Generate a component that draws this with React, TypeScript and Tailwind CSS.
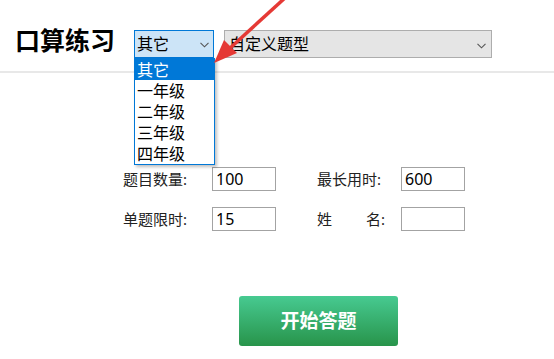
import React from "react";

function Chevron({ color = "#555" }: { color?: string }) {
  return (
    <svg width="9" height="6" viewBox="0 0 9 6" className="block">
      <path d="M0.5 0.8 L4.5 4.8 L8.5 0.8" fill="none" stroke={color} strokeWidth="1.1" />
    </svg>
  );
}

export default function App() {
  const grades = ["其它", "一年级", "二年级", "三年级", "四年级"];
  return (
    <div className="relative w-[554px] h-[359px] overflow-hidden bg-white text-[#1a1a1a] font-['Noto_Sans','Noto_Sans_CJK_SC',sans-serif]">
      {/* header */}
      <div className="flex items-start h-[73px] border-b-2 border-[#e8e8e8] pt-[28px] pl-[15px]">
        <div className="w-[119px] text-[25px] leading-[24px] font-bold text-black">口算练习</div>
        <div className="relative mt-[2px]">
          <div className="flex items-center w-[80px] h-[28px] border border-[#0078d7] bg-[#cce4f7] pl-[2px] text-[16px] leading-none text-black">
            <span>其它</span>
            <span className="absolute right-[5px] top-[12px]">
              <Chevron />
            </span>
          </div>
          <div className="absolute left-0 top-[28px] w-[81px] border border-[#0078d7] bg-white shadow-[2px_2px_3px_rgba(0,0,0,0.25)] z-10">
            {grades.map((g, i) => (
              <div
                key={g}
                className={
                  i === 0
                    ? "h-[21px] flex items-center pl-[2px] text-[16px] leading-none bg-[#0078d7] text-white"
                    : "h-[21px] flex items-center pl-[2px] text-[16px] leading-none text-black"
                }
              >
                {g}
              </div>
            ))}
          </div>
        </div>
        <div className="relative ml-[10px] mt-[2px] flex items-center w-[268px] h-[28px] border border-[#adadad] bg-[#e5e5e5] pl-[4px] text-[16px] leading-none text-black">
          <span>自定义题型</span>
          <span className="absolute right-[5px] top-[12px]">
            <Chevron />
          </span>
        </div>
      </div>

      {/* form */}
      <div className="mt-[94px] pl-[123px] text-[15px] text-[#222]">
        <div className="flex items-center h-[24px]">
          <div className="w-[89px]">题目数量:</div>
          <div className="flex items-center w-[64px] h-[24px] border border-[#a3a3a3] pl-[3px] text-[16px] text-black">100</div>
          <div className="ml-[41px] w-[84px]">最长用时:</div>
          <div className="flex items-center w-[64px] h-[24px] border border-[#a3a3a3] pl-[3px] text-[16px] text-black">600</div>
        </div>
        <div className="flex items-center h-[24px] mt-[16px]">
          <div className="w-[89px]">单题限时:</div>
          <div className="flex items-center w-[64px] h-[24px] border border-[#a3a3a3] pl-[3px] text-[16px] text-black">15</div>
          <div className="ml-[41px] w-[84px]">
            <div className="flex justify-between w-[68px]">
              <span>姓</span>
              <span>名:</span>
            </div>
          </div>
          <div className="w-[64px] h-[24px] border border-[#a3a3a3]"></div>
        </div>
      </div>

      {/* button */}
      <div className="mt-[65px] ml-[239px] flex items-center justify-center w-[159px] h-[50px] rounded-[3px] bg-linear-to-b from-[#47ca91] to-[#28944a] text-white text-[19px] font-bold">
        开始答题
      </div>

      {/* red arrow overlay */}
      <svg className="absolute left-0 top-0 pointer-events-none z-20" width="554" height="100" viewBox="0 0 554 100">
        <line x1="286" y1="-3" x2="228" y2="50" stroke="#e53935" strokeWidth="3.5" />
        <polygon points="214,63 224,40 237,53" fill="#e53935" />
      </svg>
    </div>
  );
}
